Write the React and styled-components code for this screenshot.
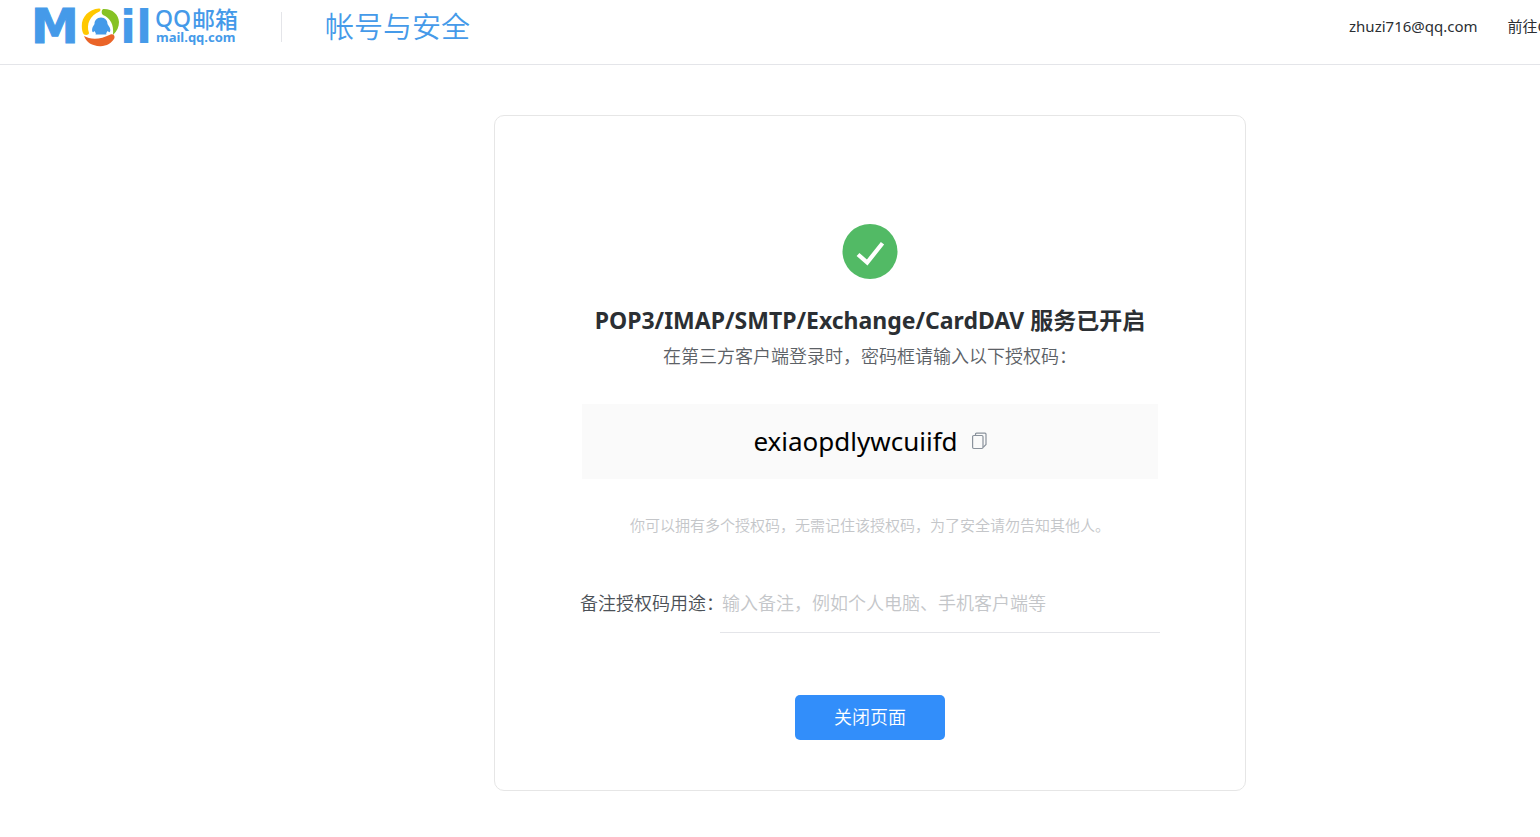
import styled, { createGlobalStyle } from "styled-components";

const GlobalStyle = createGlobalStyle`
  * {
    box-sizing: border-box;
  }

  html {
    overflow-x: hidden;
  }

  body {
    margin: 0;
    background-color: #fff;
    color: #2b2f33;
    font-family: "Noto Sans", "Noto Sans CJK SC", sans-serif;
    font-size: 15px;
    line-height: 24px;
  }

  button,
  input {
    font: inherit;
  }
`;

const Page = styled.div`
  min-width: 1740px;
`;

const Header = styled.header`
  display: flex;
  align-items: flex-start;
  height: 65px;
  padding: 0 149px 0 30px;
  border-bottom: 1px solid #e4e5e9;
`;

const LogoLink = styled.a`
  display: block;
  height: 50px;
`;

const Divider = styled.span`
  width: 1px;
  height: 30px;
  margin: 12px 43px 0 41px;
  background-color: #e4e5e9;
`;

const PageTitle = styled.h1`
  margin: 6px 0 0;
  color: #459ae9;
  font-size: 29px;
  font-weight: 350;
  line-height: 42px;
`;

const UserNav = styled.nav`
  display: flex;
  gap: 30px;
  margin: 14px 0 0 auto;
  white-space: nowrap;
`;

const NavLink = styled.a`
  color: #2b2f33;
  text-decoration: none;
`;

const Main = styled.main`
  display: flex;
  justify-content: center;
  padding: 50px 0;
`;

const Card = styled.section`
  display: flex;
  flex-direction: column;
  align-items: center;
  width: 752px;
  padding: 108px 85px 50px;
  border: 1px solid #e6e6e6;
  border-radius: 10px;
`;

const Heading = styled.h2`
  margin: 25px 0 0;
  font-size: 23px;
  font-weight: 700;
  line-height: 32px;
`;

const Subtitle = styled.p`
  margin: 8px 0 36px;
  color: #5c6166;
  font-size: 18px;
  font-weight: 350;
`;

const CodeBox = styled.div`
  display: flex;
  align-items: center;
  justify-content: center;
  gap: 14px;
  width: 576px;
  height: 75px;
  padding-bottom: 2px;
  background-color: #fafafa;
`;

const Code = styled.span`
  color: #000;
  font-size: 26px;
  line-height: 36px;
`;

const CopyButton = styled.button`
  display: flex;
  padding: 0;
  border: none;
  background: none;
  color: #8a929c;
  cursor: pointer;
`;

const Hint = styled.p`
  margin: 34px 0 36px;
  color: #c4c6c9;
  font-weight: 350;
`;

const Form = styled.form`
  display: flex;
  flex-direction: column;
  align-items: center;
  width: 100%;
`;

const Field = styled.div`
  display: flex;
  align-items: center;
  width: 100%;
  font-size: 18px;
`;

const Label = styled.label`
  width: 140px;
  color: #4c5157;
  font-weight: 350;
  white-space: nowrap;
`;

const Input = styled.input`
  flex: 1;
  min-width: 0;
  height: 60px;
  padding: 0 2px;
  border: none;
  border-bottom: 1px solid #e4e5e9;
  outline: none;
  color: #2b2f33;
  font-weight: 350;

  &::placeholder {
    color: #c4c6c9;
    opacity: 1;
  }
`;

const CloseButton = styled.button`
  width: 150px;
  height: 45px;
  margin-top: 62px;
  padding: 0 0 2px;
  border: none;
  border-radius: 5px;
  background-color: #328efa;
  color: #fff;
  font-size: 18px;
  font-weight: 350;
  cursor: pointer;
`;

const LogoText = styled.text`
  fill: #459ae9;
  stroke: #459ae9;
  stroke-width: ${(props) => props.$stroke || 0};
  font-family: ${(props) => props.$family || '"Noto Sans"'},
    "Noto Sans CJK SC", sans-serif;
  font-size: ${(props) => props.$size}px;
  font-weight: ${(props) => props.$weight || 400};
`;

function Logo() {
  return (
    <svg width="210" height="50" viewBox="30 0 210 50" aria-hidden="true">
      <LogoText
        x="31"
        y="43"
        $size={48}
        $weight={700}
        $stroke={1}
        $family='"DejaVu Sans"'
      >
        M
      </LogoText>
      <LogoText
        x="120"
        y="43"
        $size={47}
        $weight={700}
        $family='"DejaVu Sans"'
      >
        il
      </LogoText>
      <path
        fill="#ffc800"
        d="M99 8.500C89 9 81.500 17 81.800 26c0 4 .7 6.500 2.200 8.500 2 1 5 .5 5-1.500-3-9 1-17.500 10.500-21.500 1.500-1 1.500-3-.5-3z"
      />
      <path
        fill="#86c224"
        d="M103 9c-1.800 1.500-1.800 4.500 0 6 7.500 3 11 9.500 10 20 4-4 6-8 6-13C118.500 14 112 8.500 103 9z"
      />
      <path
        fill="#ea6428"
        d="M84 36c6 3.500 16 4 26.500-1.500 2.500-1 4.500 1 4 3.500C112 43 106 46.500 100 46.200 92 45.800 86.500 42.500 84 36z"
      />
      <path
        fill="#459ae9"
        d="M101 17.500c-4.200 0-6.500 3-6.500 6.500l-1.500 2.500c-1.200 2-1.300 5.500.2 5.700l1.300-1.200c.3 1 .8 1.700 1.500 2.200-.8.500-.8 1.300.5 1.300h9c1.300 0 1.300-.8.500-1.300.7-.5 1.200-1.200 1.500-2.200l1.800 1.200c1.500-.2 1.400-3.700-.3-5.700l-1.500-2.500c0-3.500-2.300-6.500-6.500-6.500z"
      />
      <LogoText x="155" y="27" $size={23} $weight={500}>
        QQ
      </LogoText>
      <LogoText x="192" y="28" $size={23} $weight={500}>
        邮箱
      </LogoText>
      <LogoText x="156" y="42" $size={13} $weight={700}>
        mail.qq.com
      </LogoText>
    </svg>
  );
}

function SuccessIcon() {
  return (
    <svg width="56" height="55" viewBox="0 0 56 55" aria-hidden="true">
      <circle cx="28" cy="27.500" r="27.500" fill="#52ba65" />
      <path
        fill="none"
        stroke="#fff"
        strokeWidth="4.200"
        d="M16 30.500L25.200 38.500L40.500 19.200"
      />
    </svg>
  );
}

function CopyIcon() {
  return (
    <svg
      width="15"
      height="18"
      viewBox="0 0 15 18"
      fill="none"
      stroke="currentColor"
      strokeWidth="1.200"
      aria-hidden="true"
    >
      <rect x="0.600" y="3.500" width="10.400" height="13" rx="1.200" />
      <path d="M3.500 3.200V2.200Q3.500 1.200 4.500 1.200H13Q14 1.200 14 2.200V12.500L11.200 15.300" />
    </svg>
  );
}

function App() {
  return (
    <>
      <GlobalStyle />
      <Page>
        <Header>
          <LogoLink href="#" aria-label="QQ邮箱">
            <Logo />
          </LogoLink>
          <Divider />
          <PageTitle>帐号与安全</PageTitle>
          <UserNav>
            <NavLink href="#">zhuzi716@qq.com</NavLink>
            <NavLink href="#">前往QQ邮箱</NavLink>
          </UserNav>
        </Header>

        <Main>
          <Card>
            <SuccessIcon />
            <Heading>POP3/IMAP/SMTP/Exchange/CardDAV 服务已开启</Heading>
            <Subtitle>在第三方客户端登录时，密码框请输入以下授权码：</Subtitle>

            <CodeBox>
              <Code>exiaopdlywcuiifd</Code>
              <CopyButton type="button" aria-label="复制">
                <CopyIcon />
              </CopyButton>
            </CodeBox>

            <Hint>
              你可以拥有多个授权码，无需记住该授权码，为了安全请勿告知其他人。
            </Hint>

            <Form onSubmit={(e) => e.preventDefault()}>
              <Field>
                <Label htmlFor="remark">备注授权码用途：</Label>
                <Input
                  id="remark"
                  type="text"
                  placeholder="输入备注，例如个人电脑、手机客户端等"
                />
              </Field>
              <CloseButton type="button">关闭页面</CloseButton>
            </Form>
          </Card>
        </Main>
      </Page>
    </>
  );
}

export default App;
